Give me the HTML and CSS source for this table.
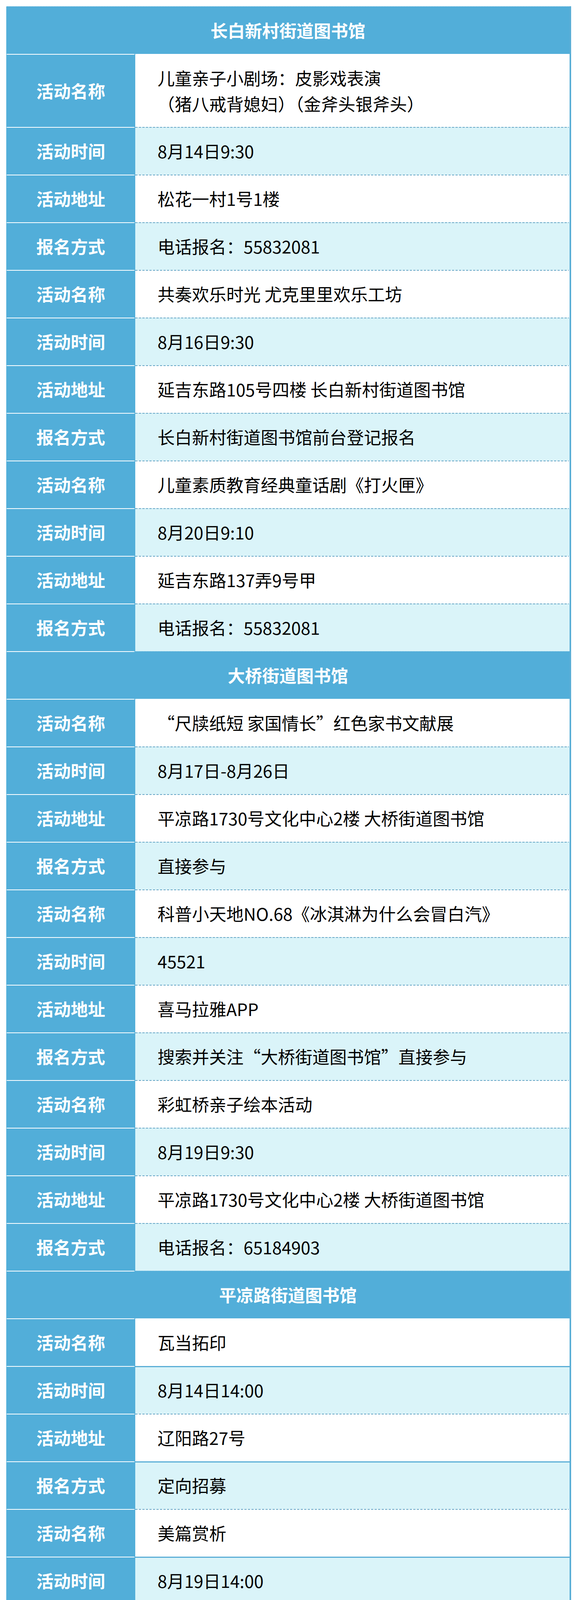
FILE: index.html
```html
<!DOCTYPE html>
<html lang="zh-CN">
<head>
<meta charset="utf-8">
<title>街道图书馆活动</title>
<link rel="stylesheet" href="styles.css">
</head>
<body>
<div class="table">
  <div class="head top">长白新村街道图书馆</div>
  <div class="row tall"><div class="label">活动名称</div><div class="value first two">儿童亲子小剧场：皮影戏表演<br>（猪八戒背媳妇）（金斧头银斧头）</div></div>
  <div class="row"><div class="label">活动时间</div><div class="value alt">8月14日9:30</div></div>
  <div class="row"><div class="label">活动地址</div><div class="value">松花一村1号1楼</div></div>
  <div class="row"><div class="label">报名方式</div><div class="value alt">电话报名：55832081</div></div>
  <div class="row"><div class="label">活动名称</div><div class="value">共奏欢乐时光 尤克里里欢乐工坊</div></div>
  <div class="row"><div class="label">活动时间</div><div class="value alt">8月16日9:30</div></div>
  <div class="row"><div class="label">活动地址</div><div class="value">延吉东路105号四楼 长白新村街道图书馆</div></div>
  <div class="row"><div class="label">报名方式</div><div class="value alt">长白新村街道图书馆前台登记报名</div></div>
  <div class="row"><div class="label">活动名称</div><div class="value">儿童素质教育经典童话剧《打火匣》</div></div>
  <div class="row"><div class="label">活动时间</div><div class="value alt">8月20日9:10</div></div>
  <div class="row"><div class="label">活动地址</div><div class="value">延吉东路137弄9号甲</div></div>
  <div class="row"><div class="label">报名方式</div><div class="value alt">电话报名：55832081</div></div>

  <div class="head">大桥街道图书馆</div>
  <div class="row"><div class="label">活动名称</div><div class="value first">“尺牍纸短 家国情长”红色家书文献展</div></div>
  <div class="row"><div class="label">活动时间</div><div class="value alt">8月17日-8月26日</div></div>
  <div class="row"><div class="label">活动地址</div><div class="value">平凉路1730号文化中心2楼 大桥街道图书馆</div></div>
  <div class="row"><div class="label">报名方式</div><div class="value alt">直接参与</div></div>
  <div class="row"><div class="label">活动名称</div><div class="value">科普小天地NO.68《冰淇淋为什么会冒白汽》</div></div>
  <div class="row"><div class="label">活动时间</div><div class="value alt">45521</div></div>
  <div class="row"><div class="label">活动地址</div><div class="value">喜马拉雅APP</div></div>
  <div class="row"><div class="label">报名方式</div><div class="value alt">搜索并关注“大桥街道图书馆”直接参与</div></div>
  <div class="row"><div class="label">活动名称</div><div class="value">彩虹桥亲子绘本活动</div></div>
  <div class="row"><div class="label">活动时间</div><div class="value alt">8月19日9:30</div></div>
  <div class="row"><div class="label">活动地址</div><div class="value">平凉路1730号文化中心2楼 大桥街道图书馆</div></div>
  <div class="row"><div class="label">报名方式</div><div class="value alt">电话报名：65184903</div></div>

  <div class="head">平凉路街道图书馆</div>
  <div class="row"><div class="label">活动名称</div><div class="value first">瓦当拓印</div></div>
  <div class="row"><div class="label">活动时间</div><div class="value alt solid">8月14日14:00</div></div>
  <div class="row"><div class="label">活动地址</div><div class="value">辽阳路27号</div></div>
  <div class="row"><div class="label">报名方式</div><div class="value alt solid">定向招募</div></div>
  <div class="row"><div class="label">活动名称</div><div class="value">美篇赏析</div></div>
  <div class="row"><div class="label">活动时间</div><div class="value alt solid">8月19日14:00</div></div>
  <div class="row"><div class="label">活动地址</div><div class="value">怀德路399号301室</div></div>
  <div class="row last"><div class="label">报名方式</div><div class="value alt solid">电话报名：65468141</div></div>
</div>
</body>
</html>
```
FILE: styles.css
```css
html, body {
  margin: 0;
  padding: 0;
  background: #ffffff;
}

body {
  font-family: "Noto Sans CJK SC", "Microsoft YaHei", "Noto Sans", sans-serif;
}

.table {
  margin: 16px 15px 0 16px;
  border-right: 4px solid #5aaed6;
}

.head {
  height: 122px;
  display: flex;
  align-items: center;
  justify-content: center;
  color: #ffffff;
  font-size: 44px;
  font-weight: 700;
  background:
    linear-gradient(#ffffff, #ffffff) no-repeat 1px 0 / 327px 2px,
    repeating-linear-gradient(90deg, #9fd2ea 0 2px, transparent 2px 4px) no-repeat 330px 0 / 100% 1px,
    #52aed9;
}

.head.top {
  background:
    repeating-linear-gradient(90deg, #a9d6ec 0 2px, transparent 2px 4px) no-repeat 0 0 / 100% 1px,
    #52aed9;
}

.row {
  display: grid;
  grid-template-columns: 330px 1fr;
  height: 122px;
}

.row.tall {
  height: 187px;
}

.label {
  display: flex;
  align-items: center;
  justify-content: center;
  color: #ffffff;
  font-size: 44px;
  font-weight: 700;
  background:
    linear-gradient(#ffffff, #ffffff) no-repeat 1px 0 / 327px 2px,
    #52aed9;
}

.value {
  display: flex;
  align-items: center;
  padding-left: 57px;
  color: #000000;
  font-size: 44px;
  font-weight: 400;
  white-space: nowrap;
  background:
    repeating-linear-gradient(90deg, #6aa9c8 0 6px, transparent 6px 9px) no-repeat 0 0 / calc(100% - 2px) 2px,
    #ffffff;
}

.value.alt {
  background:
    repeating-linear-gradient(90deg, #6aa9c8 0 6px, transparent 6px 9px) no-repeat 0 0 / calc(100% - 2px) 2px,
    #daf4f9;
}

.value.first {
  background: #ffffff;
}

.value.two {
  line-height: 66px;
}

.value.alt.solid {
  background:
    linear-gradient(#5aaed6, #5aaed6) no-repeat 0 0 / 100% 3px,
    #daf4f9;
}

.row.last .value {
  background:
    linear-gradient(#5aaed6, #5aaed6) no-repeat 0 0 / 100% 3px,
    repeating-linear-gradient(90deg, #6aa9c8 0 6px, transparent 6px 9px) no-repeat 0 100% / 100% 2px,
    #daf4f9;
}
```
